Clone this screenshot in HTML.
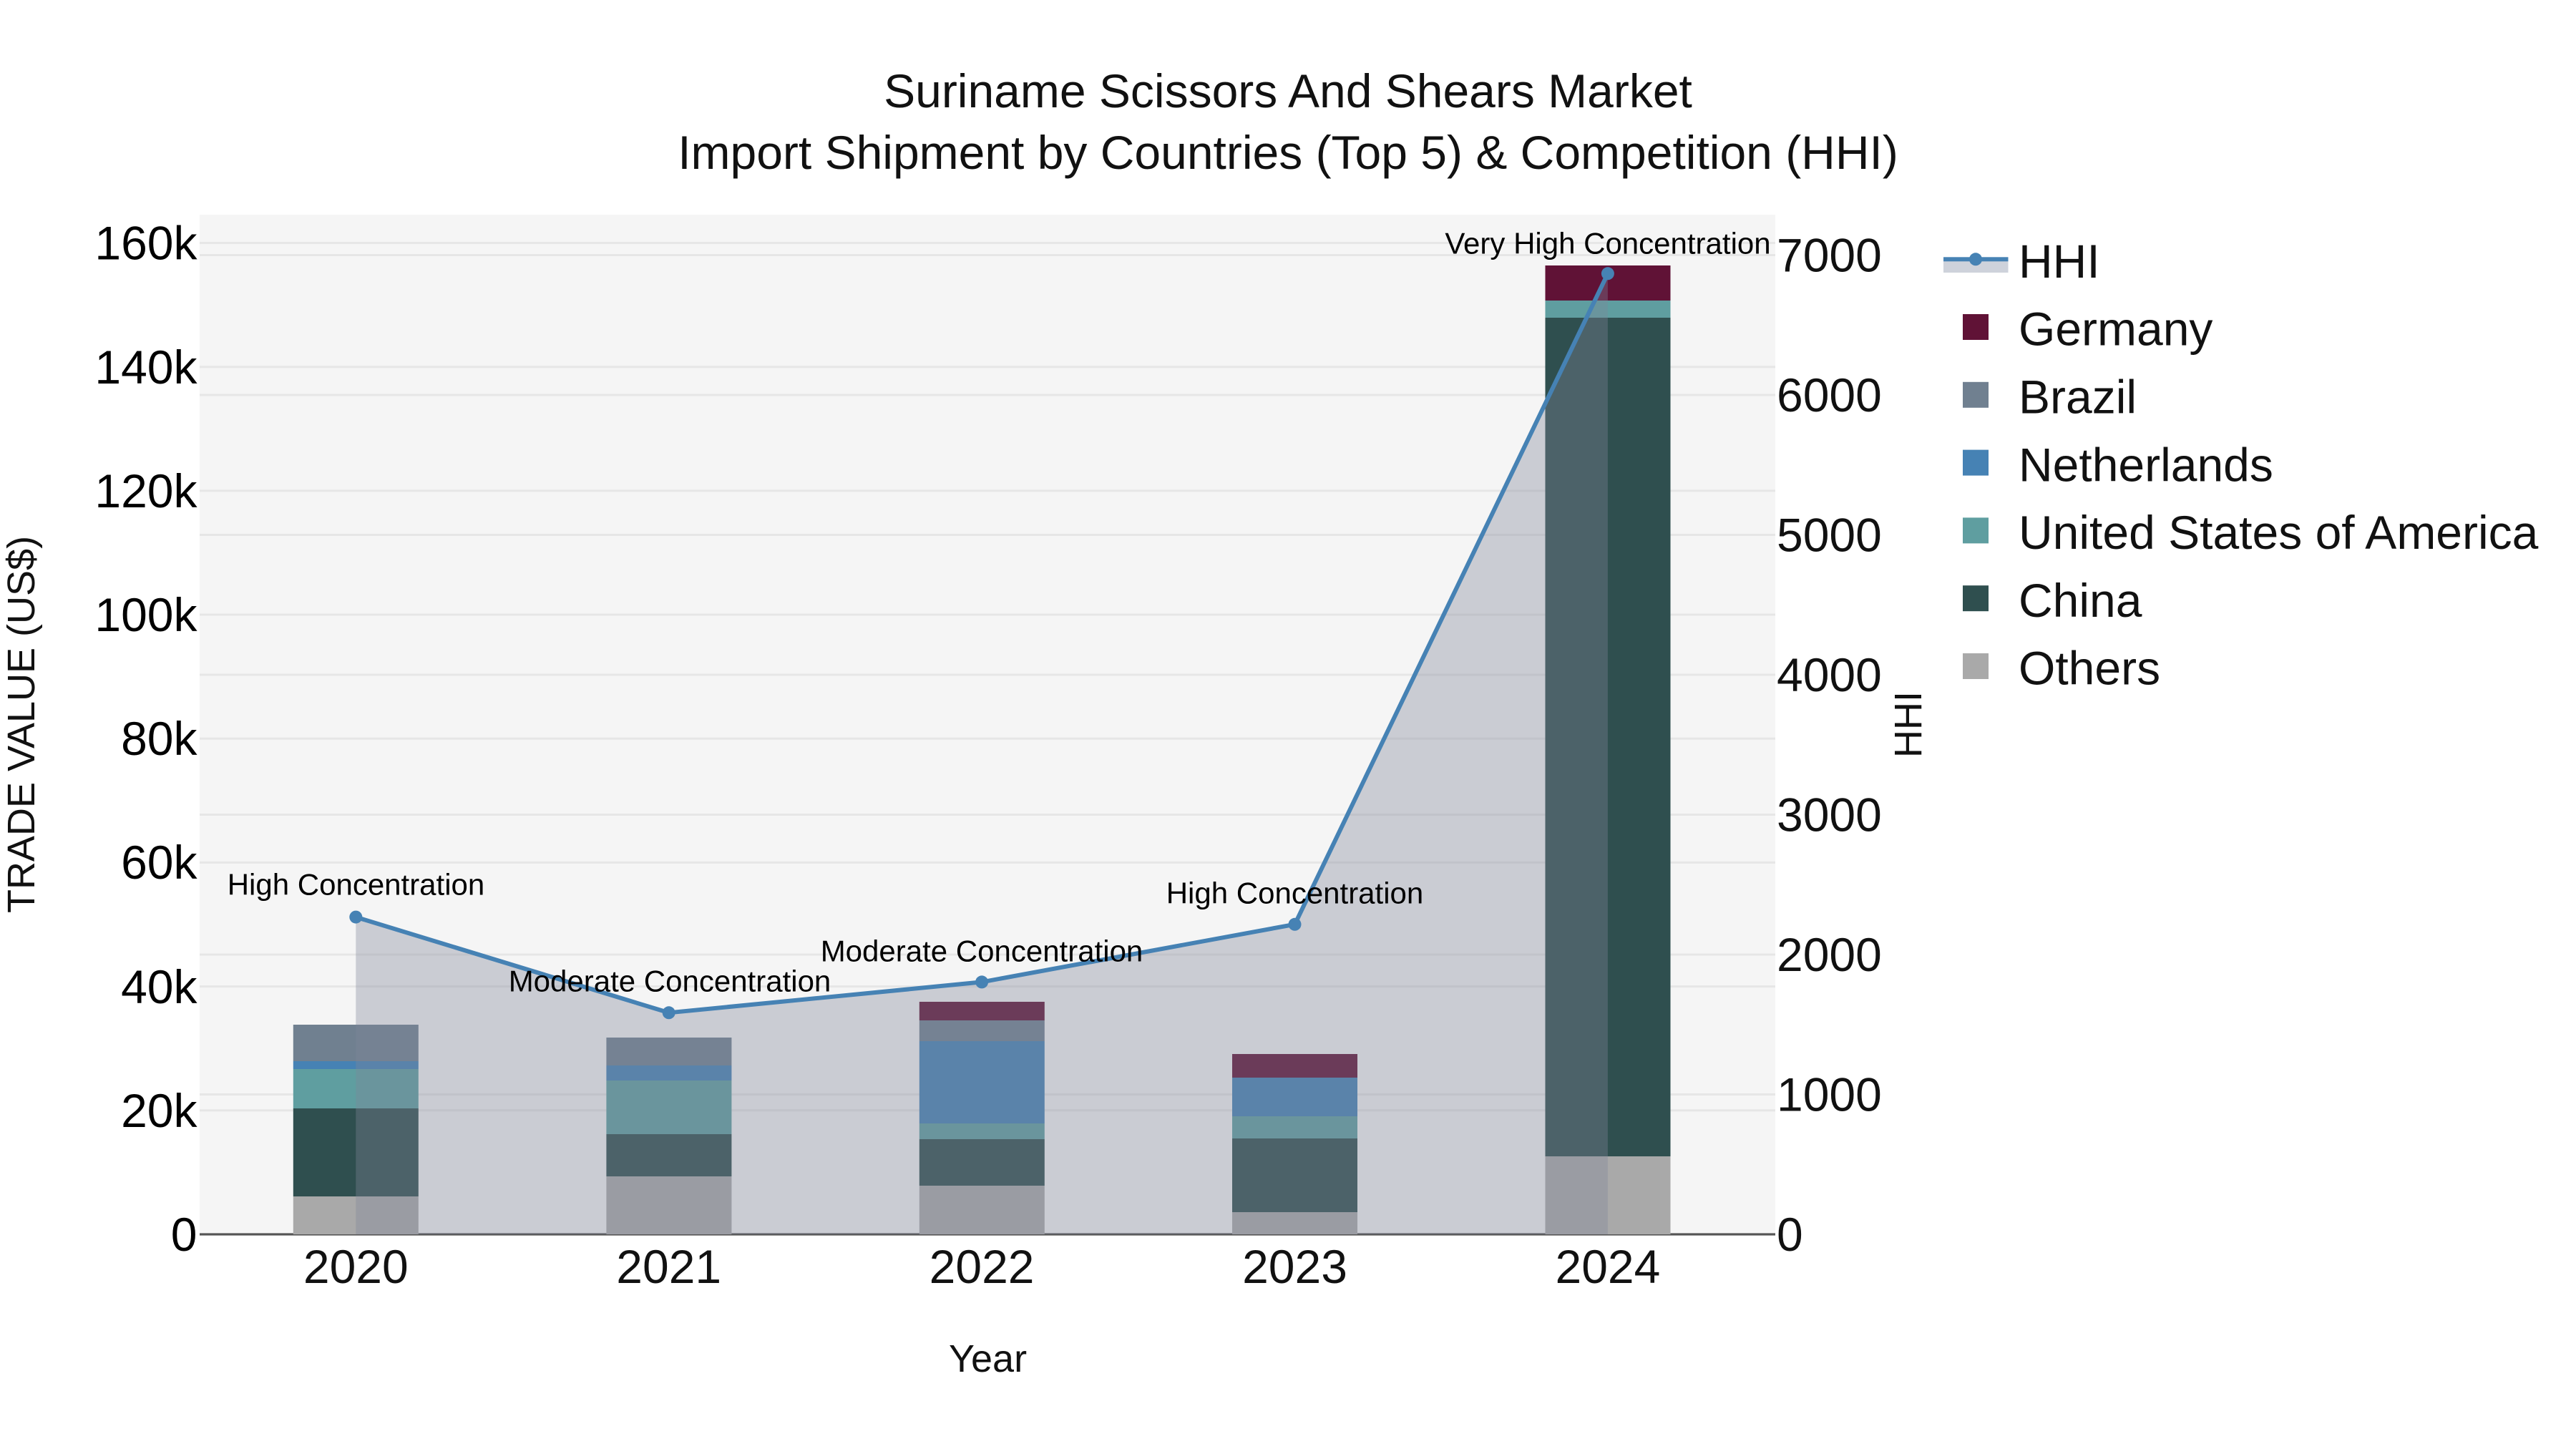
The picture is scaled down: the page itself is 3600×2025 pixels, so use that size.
<!DOCTYPE html>
<html>
<head>
<meta charset="utf-8">
<title>Suriname Scissors And Shears Market</title>
<style>
html,body{margin:0;padding:0;background:#fff;width:3600px;height:2025px;overflow:hidden}
svg{display:block}
text{font-family:"Liberation Sans",sans-serif}
.tl{font-size:66px;fill:#000;text-anchor:end}
.tr{font-size:66px;fill:#111}
.tx{font-size:66px;fill:#111;text-anchor:middle}
.an{font-size:42px;fill:#000;text-anchor:middle}
.lg{font-size:66px;fill:#111}
.ti{font-size:66px;fill:#111;text-anchor:middle}
.ax{font-size:54px;fill:#111;text-anchor:middle}
</style>
</head>
<body>
<svg width="3600" height="2025" viewBox="0 0 3600 2025" xmlns="http://www.w3.org/2000/svg">
<rect x="0" y="0" width="3600" height="2025" fill="#fff"/>
<rect x="279" y="300" width="2202" height="1425" fill="#f5f5f5"/>

<!-- grid -->
<g stroke="#e6e6e6" stroke-width="3">
<path d="M279 1551.8H2481M279 1378.6H2481M279 1205.4H2481M279 1032.2H2481M279 859H2481M279 685.9H2481M279 512.7H2481M279 339.5H2481"/>
<path d="M279 1529.5H2481M279 1334H2481M279 1138.5H2481M279 943H2481M279 747.5H2481M279 552H2481M279 356.5H2481"/>
</g>
<!-- zero line -->
<rect x="279" y="1723.4" width="2202" height="3.2" fill="#555"/>

<!-- bars -->
<g>
<rect x="409.8" y="1432" width="175" height="51" fill="#708090"/>
<rect x="409.8" y="1483" width="175" height="11" fill="#4682b4"/>
<rect x="409.8" y="1494" width="175" height="55" fill="#5f9ea0"/>
<rect x="409.8" y="1549" width="175" height="123" fill="#2f4f4f"/>
<rect x="409.8" y="1672" width="175" height="53" fill="#a9a9a9"/>

<rect x="847.4" y="1450" width="175" height="39" fill="#708090"/>
<rect x="847.4" y="1489" width="175" height="21" fill="#4682b4"/>
<rect x="847.4" y="1510" width="175" height="75" fill="#5f9ea0"/>
<rect x="847.4" y="1585" width="175" height="59" fill="#2f4f4f"/>
<rect x="847.4" y="1644" width="175" height="81" fill="#a9a9a9"/>

<rect x="1284.8" y="1400" width="175" height="26" fill="#601236"/>
<rect x="1284.8" y="1426" width="175" height="29" fill="#708090"/>
<rect x="1284.8" y="1455" width="175" height="115" fill="#4682b4"/>
<rect x="1284.8" y="1570" width="175" height="22" fill="#5f9ea0"/>
<rect x="1284.8" y="1592" width="175" height="65" fill="#2f4f4f"/>
<rect x="1284.8" y="1657" width="175" height="68" fill="#a9a9a9"/>

<rect x="1722" y="1473" width="175" height="33" fill="#601236"/>
<rect x="1722" y="1506" width="175" height="54" fill="#4682b4"/>
<rect x="1722" y="1560" width="175" height="31" fill="#5f9ea0"/>
<rect x="1722" y="1591" width="175" height="103" fill="#2f4f4f"/>
<rect x="1722" y="1694" width="175" height="31" fill="#a9a9a9"/>

<rect x="2159.5" y="371" width="175" height="49" fill="#601236"/>
<rect x="2159.5" y="420" width="175" height="24" fill="#5f9ea0"/>
<rect x="2159.5" y="444" width="175" height="1172" fill="#2f4f4f"/>
<rect x="2159.5" y="1616" width="175" height="109" fill="#a9a9a9"/>
</g>

<!-- HHI area and line -->
<path d="M497.3 1281.6L934.7 1415.3L1372.1 1372.4L1809.5 1291.8L2246.9 382.3V1725H497.3Z" fill="#7f8499" fill-opacity="0.36"/>
<path d="M497.3 1281.6L934.7 1415.3L1372.1 1372.4L1809.5 1291.8L2246.9 382.3" fill="none" stroke="#4682b4" stroke-width="6" stroke-linejoin="round"/>
<g fill="#4682b4">
<circle cx="497.3" cy="1281.6" r="9"/>
<circle cx="934.7" cy="1415.3" r="9"/>
<circle cx="1372.1" cy="1372.4" r="9"/>
<circle cx="1809.5" cy="1291.8" r="9"/>
<circle cx="2246.9" cy="382.3" r="9"/>
</g>

<!-- annotations -->
<text class="an" x="497.5" y="1250.5">High Concentration</text>
<text class="an" x="936" y="1385.5">Moderate Concentration</text>
<text class="an" x="1372" y="1343.5">Moderate Concentration</text>
<text class="an" x="1809.5" y="1262.5">High Concentration</text>
<text class="an" x="2247" y="354.5">Very High Concentration</text>

<!-- left ticks -->
<text class="tl" x="275.5" y="1748">0</text>
<text class="tl" x="275.5" y="1575">20k</text>
<text class="tl" x="275.5" y="1402">40k</text>
<text class="tl" x="275.5" y="1228">60k</text>
<text class="tl" x="275.5" y="1055">80k</text>
<text class="tl" x="275.5" y="882">100k</text>
<text class="tl" x="275.5" y="709">120k</text>
<text class="tl" x="275.5" y="536">140k</text>
<text class="tl" x="275.5" y="362.5">160k</text>

<!-- right ticks -->
<text class="tr" x="2483" y="1748">0</text>
<text class="tr" x="2483" y="1552.5">1000</text>
<text class="tr" x="2483" y="1357">2000</text>
<text class="tr" x="2483" y="1161.5">3000</text>
<text class="tr" x="2483" y="966">4000</text>
<text class="tr" x="2483" y="770.5">5000</text>
<text class="tr" x="2483" y="575">6000</text>
<text class="tr" x="2483" y="379.5">7000</text>

<!-- x ticks -->
<text class="tx" x="497.3" y="1793">2020</text>
<text class="tx" x="934.7" y="1793">2021</text>
<text class="tx" x="1372.1" y="1793">2022</text>
<text class="tx" x="1809.5" y="1793">2023</text>
<text class="tx" x="2246.9" y="1793">2024</text>

<!-- titles -->
<text class="ti" x="1800" y="150">Suriname Scissors And Shears Market</text>
<text class="ti" x="1800" y="236">Import Shipment by Countries (Top 5) &amp; Competition (HHI)</text>
<text class="ax" x="1380.5" y="1917">Year</text>
<text class="ax" transform="translate(48 1012.5) rotate(-90)" x="0" y="0">TRADE VALUE (US$)</text>
<text class="ax" transform="translate(2685 1012.5) rotate(-90)" x="0" y="0">HHI</text>

<!-- legend -->
<rect x="2716" y="362" width="90.5" height="19" fill="#ced2db"/>
<rect x="2716" y="359.3" width="90.5" height="6" fill="#4682b4"/>
<circle cx="2761" cy="362.3" r="9" fill="#4682b4"/>
<text class="lg" x="2821" y="388">HHI</text>

<rect x="2743" y="439" width="36" height="36" fill="#601236"/>
<text class="lg" x="2821" y="482.7">Germany</text>
<rect x="2743" y="533.8" width="36" height="36" fill="#708090"/>
<text class="lg" x="2821" y="577.5">Brazil</text>
<rect x="2743" y="628.6" width="36" height="36" fill="#4682b4"/>
<text class="lg" x="2821" y="672.3">Netherlands</text>
<rect x="2743" y="723.4" width="36" height="36" fill="#5f9ea0"/>
<text class="lg" x="2821" y="767.1">United States of America</text>
<rect x="2743" y="818.2" width="36" height="36" fill="#2f4f4f"/>
<text class="lg" x="2821" y="861.9">China</text>
<rect x="2743" y="913" width="36" height="36" fill="#a9a9a9"/>
<text class="lg" x="2821" y="956.7">Others</text>
</svg>
</body>
</html>
